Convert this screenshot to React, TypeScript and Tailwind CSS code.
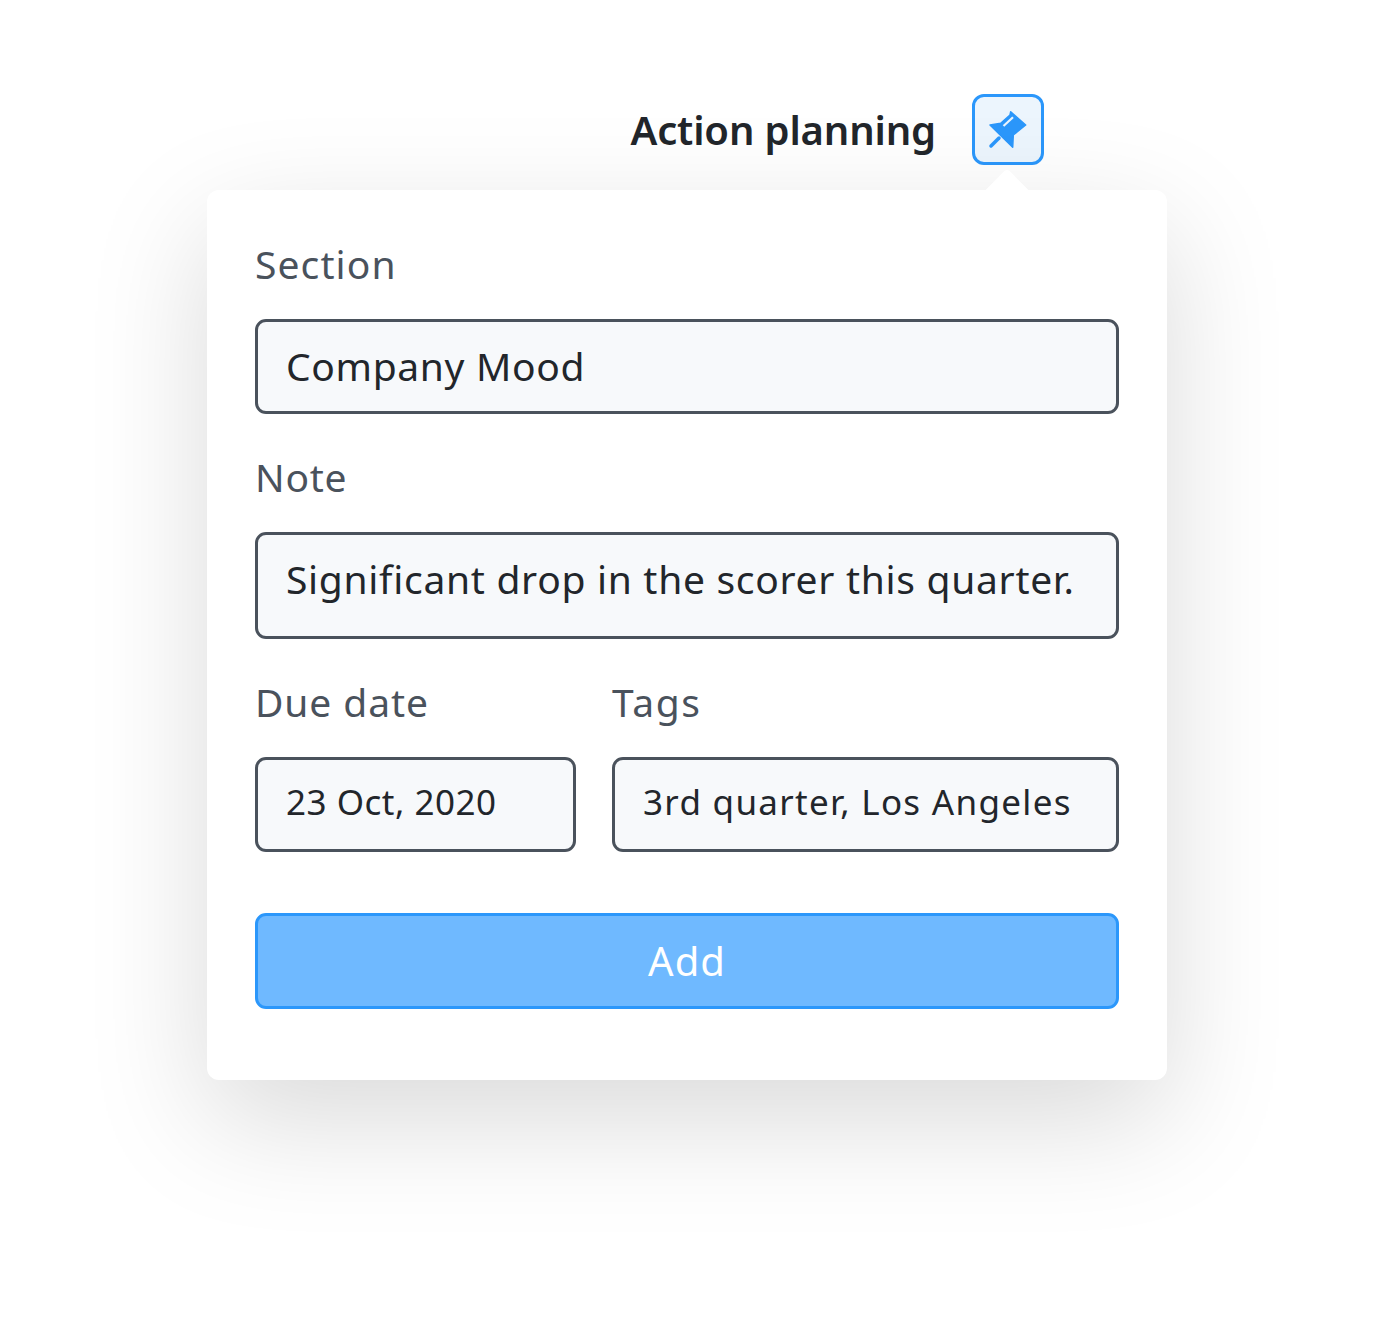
function Field({ label, value, tall, small, labelClass, valueClass, className }: { label: string; value: string; tall?: boolean; small?: boolean; labelClass: string; valueClass: string; className?: string }) {
  return (
    <div className={className}>
      <div className={`text-[39px] leading-[52px] text-[#4a525c] ${labelClass}`}>{label}</div>
      <div
        className={`mt-[29px] flex items-start rounded-[11px] border-[3px] border-[#4a525c] bg-[#f7f9fb] pl-[28px] text-[#22262b] ${tall ? "h-[107px]" : "h-[95px]"} ${small ? "text-[35px] pt-[15px] leading-[54px]" : "text-[39px] pt-[17px] leading-[54px]"} ${valueClass}`}
      >
        {value}
      </div>
    </div>
  );
}

export default function App() {
  return (
    <div className="h-[1324px] w-[1374px] overflow-hidden bg-white font-['Noto_Sans','Lato',sans-serif]">
      <div className="flex h-[190px] items-start justify-end pr-[330px] pt-[94px]">
        <div className="mt-[7px] text-[40px] font-semibold leading-[58px] tracking-[-0.15px] text-[#22262b]">Action planning</div>
        <div className="ml-[36px] flex h-[71px] w-[72px] items-center justify-center rounded-[12px] border-[3px] border-[#2b97fb] bg-[#ecf5fd]">
          <svg width="40" height="40" viewBox="0 0 40 40" className="mt-[1px]">
            <path d="M2 15 L12.7 13.3 L22 5 L22.7 1.7 L37.7 15 L34.3 17.7 L25.3 25 L24.7 37.3 Z" fill="#2b97fb" stroke="#2b97fb" strokeWidth="1.5" strokeLinejoin="round" />
            <path d="M3 36 L11 28" stroke="#2b97fb" strokeWidth="3.5" strokeLinecap="round" />
            <path d="M15.5 16 L25 7.3" stroke="#ecf5fd" strokeWidth="2.2" />
          </svg>
        </div>
      </div>
      <div className="relative ml-[207px] h-[890px] w-[960px] rounded-[12px] bg-white px-[48px] pt-[48px] shadow-[0_40px_120px_rgba(0,0,0,0.15)]">
        <div className="absolute left-[782px] top-[-14px] h-[36px] w-[36px] rotate-45 rounded-[4px] bg-white" />
        <Field label="Section" value="Company Mood" labelClass="tracking-[1.1px]" valueClass="tracking-[0.65px]" />
        <Field label="Note" value="Significant drop in the scorer this quarter." tall labelClass="tracking-[0.75px]" valueClass="tracking-[0.7px]" className="mt-[37px]" />
        <div className="mt-[37px] flex gap-[36px]">
          <Field label="Due date" value="23 Oct, 2020" small labelClass="tracking-[0.9px]" valueClass="tracking-[0.5px]" className="w-[321px]" />
          <Field label="Tags" value="3rd quarter, Los Angeles" small labelClass="tracking-[1.6px]" valueClass="tracking-[1.3px]" className="w-[507px]" />
        </div>
        <div className="mt-[61px] flex h-[96px] items-center justify-center rounded-[11px] border-[3px] border-[#2b97fb] bg-[#6fb9ff] text-[40px] tracking-[1px] text-white">
          Add
        </div>
      </div>
    </div>
  );
}
